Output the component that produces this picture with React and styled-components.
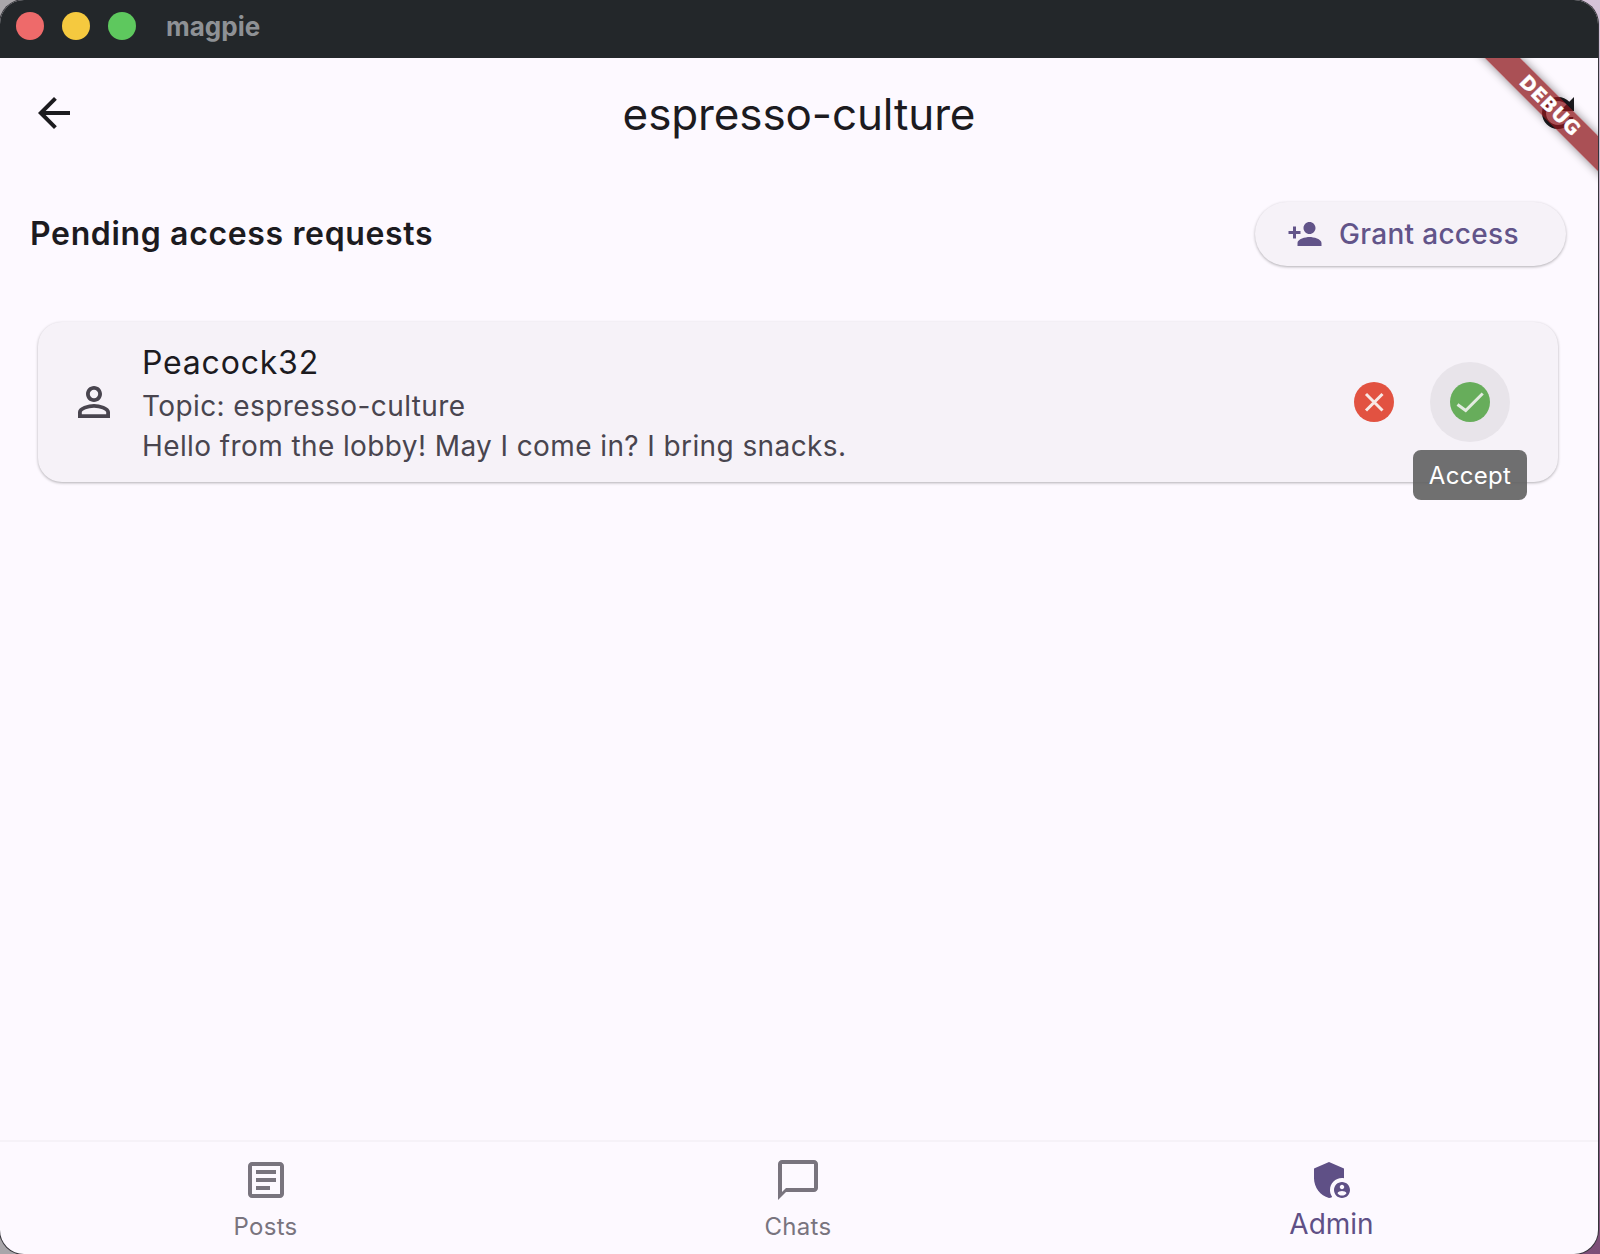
import React from "react";
import styled, { createGlobalStyle } from "styled-components";
import {
  MdArrowBack,
  MdPersonAdd,
  MdPersonOutline,
  MdOutlineArticle,
  MdChatBubbleOutline,
  MdAdminPanelSettings,
  MdRefresh,
} from "react-icons/md";

const Global = createGlobalStyle`
  html, body { margin: 0; padding: 0; }
  body { font-family: Inter, "Liberation Sans", sans-serif; }
  * { box-sizing: border-box; }
`;

const Desktop = styled.div`
  width: 1600px;
  height: 1254px;
  overflow: hidden;
  background:
    linear-gradient(#a9a6aa, #a9a6aa) left / 50% 100% no-repeat,
    linear-gradient(180deg, #d5c3d8, #7d4f78) right / 50% 100% no-repeat;
  padding-right: 2px;
`;

const AppWindow = styled.div`
  height: 100%;
  display: flex;
  flex-direction: column;
  border-radius: 24px;
  overflow: hidden;
  background: #fdf9ff;
  box-shadow: 0 0 0 1px #35343a;
`;

const TitleBar = styled.header`
  height: 58px;
  flex: none;
  background: #23272a;
  display: flex;
  align-items: center;
  padding: 0 0 6px 16px;
`;

const Light = styled.span`
  width: 28px;
  height: 28px;
  border-radius: 50%;
  background: ${(p) => p.$color};
  margin-right: 18px;
`;

const WindowName = styled.span`
  margin-left: 12px;
  font-size: 26px;
  font-weight: 700;
  color: #8e9195;
`;

const Main = styled.main`
  flex: 1;
  display: flex;
  flex-direction: column;
  position: relative;
  overflow: hidden;
`;

const AppBar = styled.div`
  height: 112px;
  flex: none;
  display: grid;
  grid-template-columns: 1fr auto 1fr;
  align-items: center;
  padding: 0 16px 2px 16px;
  color: #1c1b1f;
  svg:first-child {
    margin-left: 14px;
  }
  svg:last-child {
    justify-self: end;
  }
`;

const PageTitle = styled.h1`
  margin: 0;
  padding-top: 2px;
  font-size: 44px;
  font-weight: 400;
  letter-spacing: -0.12px;
  color: #1c1b1f;
`;

const SectionHeader = styled.div`
  display: flex;
  align-items: center;
  justify-content: space-between;
  padding: 32px 32px 0 30px;
`;

const SectionTitle = styled.h2`
  margin: 0;
  padding-bottom: 2px;
  font-size: 32px;
  font-weight: 600;
  letter-spacing: 0.65px;
  color: #1c1b1f;
`;

const GrantButton = styled.button`
  width: 311px;
  height: 64px;
  border: 0;
  border-radius: 32px;
  background: #f6f2f8;
  box-shadow: 0 1px 3px rgba(0, 0, 0, 0.3);
  color: #625489;
  display: flex;
  align-items: center;
  gap: 16px;
  padding: 0 0 0 32px;
  font-family: inherit;
  font-size: 28px;
  font-weight: 500;
  letter-spacing: 0.3px;
`;

const Card = styled.section`
  margin: 56px 40px 0 38px;
  height: 160px;
  flex: none;
  border-radius: 24px;
  background: #f6f2f8;
  box-shadow: 0 1px 3px rgba(0, 0, 0, 0.3);
  display: flex;
  align-items: center;
  padding: 0 48px 0 32px;
`;

const Avatar = styled.div`
  display: flex;
  color: #49454f;
  margin-right: 24px;
`;

const CardText = styled.div`
  flex: 1;
  display: flex;
  flex-direction: column;
  padding-top: 1px;
`;

const UserName = styled.div`
  font-size: 32px;
  line-height: 47px;
  letter-spacing: 0.8px;
  color: #1c1b1f;
`;

const Detail = styled.div`
  font-size: 28px;
  line-height: 40px;
  letter-spacing: 0.4px;
  color: #49454f;
`;

const Actions = styled.div`
  display: flex;
  align-items: center;
  gap: 16px;
`;

const ActionButton = styled.div`
  width: 80px;
  height: 80px;
  border-radius: 50%;
  display: flex;
  align-items: center;
  justify-content: center;
  position: relative;
  background: ${(p) => (p.$hover ? "#e8e4ea" : "transparent")};
`;

const Tooltip = styled.div`
  position: absolute;
  top: 88px;
  left: 50%;
  transform: translateX(-50%);
  width: 114px;
  height: 50px;
  border-radius: 8px;
  background: rgba(97, 97, 97, 0.9);
  color: #fff;
  display: flex;
  align-items: center;
  justify-content: center;
  font-size: 24px;
  letter-spacing: 0.3px;
`;

const Spacer = styled.div`
  flex: 1;
`;

const BottomNav = styled.nav`
  flex: none;
  height: 114px;
  display: grid;
  grid-template-columns: 531fr 534fr 533fr;
  border-top: 2px solid #f6f2f8;
`;

const NavItem = styled.div`
  display: flex;
  flex-direction: column;
  align-items: center;
  padding-top: 14px;
  color: ${(p) => (p.$active ? "#5f5086" : "#79747e")};
`;

const NavLabel = styled.span`
  font-size: ${(p) => (p.$active ? "28px" : "24px")};
  line-height: 32px;
  margin-top: ${(p) => (p.$active ? "4px" : "7px")};
  letter-spacing: ${(p) => (p.$active ? "0" : "0.3px")};
`;

const DebugBanner = styled.div`
  position: absolute;
  top: 35px;
  left: 1440px;
  width: 220px;
  height: 25px;
  transform: rotate(45deg);
  background: rgba(140, 20, 25, 0.74);
  box-shadow: 0 0 10px rgba(0, 0, 0, 0.45);
  color: #fff;
  font-family: "DejaVu Sans", sans-serif;
  font-size: 19px;
  font-weight: 800;
  line-height: 25px;
  text-align: center;
  letter-spacing: 0.5px;
  -webkit-text-stroke: 0.4px #fff;
`;

const StatusIcon = ({ fill, mark, children }) => (
  <svg width="40" height="40" viewBox="0 0 40 40">
    <circle cx="20" cy="20" r="20" fill={fill} />
    <path d={children} fill="none" stroke={mark} strokeWidth="3" />
  </svg>
);

export default function App() {
  return (
    <Desktop>
      <Global />
      <AppWindow>
        <TitleBar>
          <Light $color="#ee6a6a" />
          <Light $color="#f5c93f" />
          <Light $color="#5ec85e" />
          <WindowName>magpie</WindowName>
        </TitleBar>
        <Main>
          <AppBar>
            <MdArrowBack size={48} />
            <PageTitle>espresso-culture</PageTitle>
            <MdRefresh size={48} />
          </AppBar>
          <SectionHeader>
            <SectionTitle>Pending access requests</SectionTitle>
            <GrantButton>
              <MdPersonAdd size={36} />
              Grant access
            </GrantButton>
          </SectionHeader>
          <Card>
            <Avatar>
              <MdPersonOutline size={48} />
            </Avatar>
            <CardText>
              <UserName>Peacock32</UserName>
              <Detail>Topic: espresso-culture</Detail>
              <Detail>Hello from the lobby! May I come in? I bring snacks.</Detail>
            </CardText>
            <Actions>
              <ActionButton>
                <StatusIcon fill="#e25241" mark="#f8e8e5">
                  M12 12L28.5 28.5M28.5 12L12 28.5
                </StatusIcon>
              </ActionButton>
              <ActionButton $hover>
                <StatusIcon fill="#67ad5b" mark="#e3ebe0">
                  M7.5 22.5L15.7 28.5L32.7 11.5
                </StatusIcon>
                <Tooltip>Accept</Tooltip>
              </ActionButton>
            </Actions>
          </Card>
          <Spacer />
          <BottomNav>
            <NavItem>
              <MdOutlineArticle size={48} />
              <NavLabel>Posts</NavLabel>
            </NavItem>
            <NavItem>
              <MdChatBubbleOutline size={48} />
              <NavLabel>Chats</NavLabel>
            </NavItem>
            <NavItem $active>
              <MdAdminPanelSettings size={48} />
              <NavLabel $active>Admin</NavLabel>
            </NavItem>
          </BottomNav>
          <DebugBanner>DEBUG</DebugBanner>
        </Main>
      </AppWindow>
    </Desktop>
  );
}
